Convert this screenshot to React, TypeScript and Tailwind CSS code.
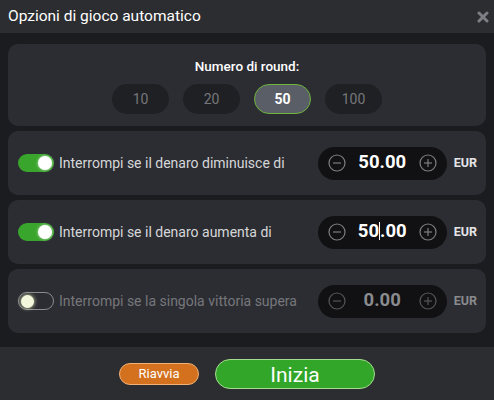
import { useState } from "react";

const Toggle = ({ on }: { on: boolean }) =>
  on ? (
    <div className="w-[36px] h-[18px] rounded-full bg-[#3aa52d] flex items-center justify-end pr-[2px] shrink-0">
      <div className="w-[14px] h-[14px] rounded-full bg-white shadow-[0_0_3px_#cfe8c8]" />
    </div>
  ) : (
    <div className="w-[36px] h-[18px] rounded-full border border-[#8b8c8f] flex items-center pl-[2px] shrink-0">
      <div className="w-[13px] h-[13px] rounded-full bg-[#f3f7dc] shadow-[0_0_4px_#e8f0c0]" />
    </div>
  );

const CircleIcon = ({ plus, dim }: { plus?: boolean; dim?: boolean }) => (
  <svg width="18" height="18" viewBox="0 0 18 18" className="shrink-0">
    <circle cx="9" cy="9" r="8" fill="none" stroke={dim ? "#55565a" : "#7d7e82"} strokeWidth="1.2" />
    <line x1="5" y1="9" x2="13" y2="9" stroke={dim ? "#55565a" : "#7d7e82"} strokeWidth="1.2" />
    {plus && <line x1="9" y1="5" x2="9" y2="13" stroke={dim ? "#55565a" : "#7d7e82"} strokeWidth="1.2" />}
  </svg>
);

const Row = ({ on, label, value, caret }: { on: boolean; label: string; value: string; caret?: boolean }) => (
  <div className="h-[64px] rounded-[10px] bg-[#2c2d32] flex items-center pl-[10px] pr-[9px]">
    <Toggle on={on} />
    <span className={`ml-[5px] text-[14px] flex-1 ${on ? "text-[#d6d7d9]" : "text-[#76777b]"}`}>{label}</span>
    <div className="w-[129px] h-[33px] rounded-full bg-[#111113] flex items-center justify-between px-[10px]">
      <CircleIcon dim={!on} />
      <span className={`text-[18.5px] font-bold ${on ? "text-white" : "text-[#8a8b8e]"}`}>
        {caret ? (
          <>
            50<span className="inline-block w-[1px] h-[18px] bg-white align-[-3px]" />.00
          </>
        ) : (
          value
        )}
      </span>
      <CircleIcon plus dim={!on} />
    </div>
    <span className={`ml-[7px] text-[12.5px] font-bold ${on ? "text-[#e4e5e7]" : "text-[#8a8b8e]"}`}>EUR</span>
  </div>
);

const App = () => {
  const [rounds, setRounds] = useState(50);
  return (
    <div className="w-[494px] h-[400px] flex flex-col bg-[#1b1c1f] font-['Roboto',sans-serif]">
      {/* Header */}
      <div className="h-[33px] bg-[#2c2d31] flex items-center justify-between pl-[8px] pr-[5px] shrink-0">
        <span className="text-[15.5px] text-white">Opzioni di gioco automatico</span>
        <svg width="12" height="12" viewBox="0 0 12 12">
          <path d="M2 2 L10 10 M10 2 L2 10" stroke="#7d7f84" strokeWidth="3" strokeLinecap="round" />
        </svg>
      </div>

      {/* Body */}
      <div className="flex-1 px-[8px] pt-[11px] flex flex-col gap-[5px]">
        <div className="h-[82px] rounded-[10px] bg-[#2c2d32] flex flex-col items-center pt-[12px]">
          <span className="text-[13.5px] font-medium text-white">Numero di round:</span>
          <div className="flex gap-[14px] mt-[8px]">
            {[10, 20, 50, 100].map((n) => (
              <button
                key={n}
                onClick={() => setRounds(n)}
                className={`w-[57px] h-[30px] rounded-full text-[14px] ${
                  rounds === n
                    ? "bg-[#5a5e67] border border-[#6db33c] text-white font-bold"
                    : "bg-[#1f2023] text-[#76777b]"
                }`}
              >
                {n}
              </button>
            ))}
          </div>
        </div>
        <Row on label="Interrompi se il denaro diminuisce di" value="50.00" />
        <Row on label="Interrompi se il denaro aumenta di" value="50.00" caret />
        <Row on={false} label="Interrompi se la singola vittoria supera" value="0.00" />
      </div>

      {/* Footer */}
      <div className="h-[53px] bg-[#2c2d31] flex items-center justify-center gap-[16px] shrink-0 mt-[14px]">
        <button className="w-[80px] h-[22px] rounded-full bg-[#d3711f] border border-[#f0b277] text-white text-[13px]">
          Riavvia
        </button>
        <button className="w-[160px] h-[30px] rounded-full bg-[#31a628] border border-[#a6dc8f] text-white text-[21px]">
          Inizia
        </button>
      </div>
    </div>
  );
};

export default App;
